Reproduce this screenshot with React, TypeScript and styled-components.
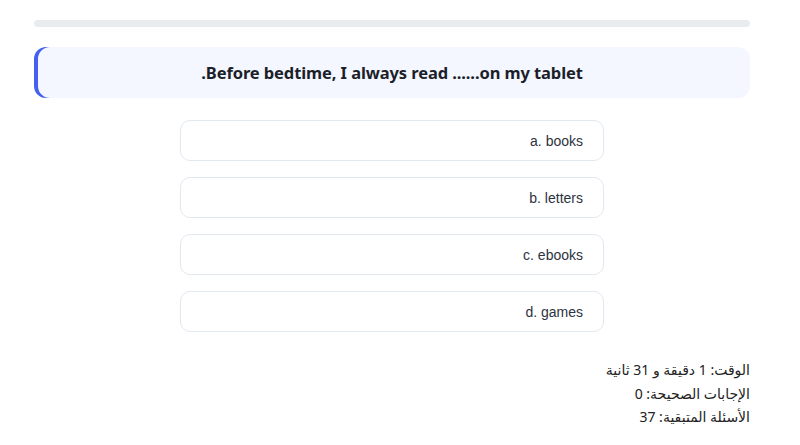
import styled, { createGlobalStyle } from "styled-components";

const GlobalStyle = createGlobalStyle`
  body {
    margin: 0;
    background: #ffffff;
    font-family: "Noto Sans", "DejaVu Sans", sans-serif;
  }
`;

const Page = styled.div`
  direction: rtl;
  width: 716px;
  margin-left: 34px;
  padding-top: 20px;
  display: flex;
  flex-direction: column;
`;

const Progress = styled.div`
  height: 7px;
  border-radius: 4px;
  background-color: #e9ecef;
  overflow: hidden;
`;

const ProgressFill = styled.div`
  height: 100%;
  background-color: #4361ee;
`;

const QuestionBox = styled.div`
  margin-top: 20px;
  height: 51px;
  display: flex;
  align-items: center;
  justify-content: center;
  background-color: #f4f7ff;
  border-radius: 12px;
  box-shadow: inset 4px 0 0 #4361ee;
  color: #1c1f2a;
  font-family: "Noto Sans", sans-serif;
  font-size: 16.5px;
  font-weight: 700;
  letter-spacing: -0.1px;
`;

const Options = styled.div`
  margin-top: 22px;
  align-self: center;
  width: 424px;
  display: flex;
  flex-direction: column;
  gap: 16px;
`;

const Option = styled.div`
  height: 41px;
  box-sizing: border-box;
  border: 1px solid #e2e8f0;
  border-radius: 10px;
  background: #ffffff;
  display: flex;
  align-items: center;
  padding: 0 20px;
  direction: ltr;
  justify-content: flex-end;
  color: #2d3340;
  font-family: "Liberation Sans", Arial, sans-serif;
  font-size: 14px;
`;

const Stats = styled.div`
  margin-top: 26px;
  display: flex;
  flex-direction: column;
  color: #222;
  font-size: 14px;
  line-height: 23.5px;
`;

const options = ["a. books", "b. letters", "c. ebooks", "d. games"];

export default function App() {
  return (
    <>
      <GlobalStyle />
      <Page>
        <Progress>
          <ProgressFill style={{ width: "0%" }} />
        </Progress>
        <QuestionBox>Before bedtime, I always read ......on my tablet.</QuestionBox>
        <Options>
          {options.map((o) => (
            <Option key={o}>{o}</Option>
          ))}
        </Options>
        <Stats>
          <div>الوقت: 1 دقيقة و 31 ثانية</div>
          <div>الإجابات الصحيحة: 0</div>
          <div>الأسئلة المتبقية: 37</div>
        </Stats>
      </Page>
    </>
  );
}
